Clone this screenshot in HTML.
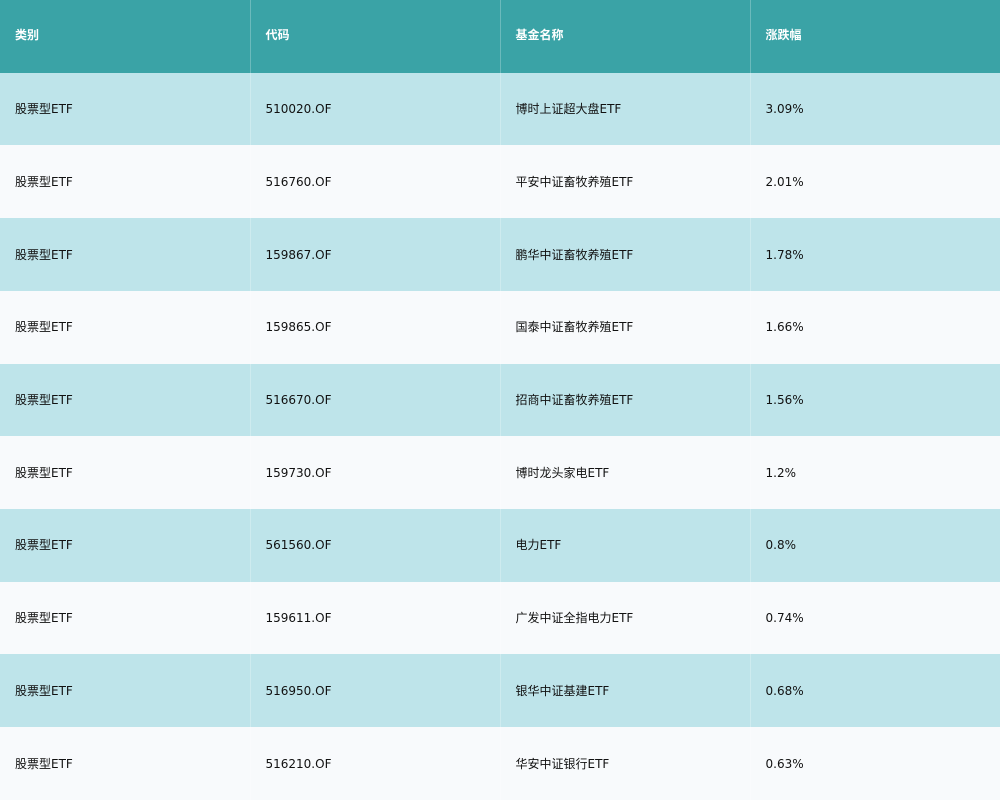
<!DOCTYPE html><html><head><meta charset="utf-8"><style>
body{margin:0;width:1000px;height:800px;overflow:hidden;font-family:"DejaVu Sans","Noto Sans CJK SC",sans-serif;font-size:12px;}
table{border-collapse:collapse;width:1000px;table-layout:fixed}
td,th{height:72.73px;padding:0 0 0 15px;text-align:left;border-left:1px solid rgba(255,255,255,0.25);box-sizing:border-box;color:#111;vertical-align:middle}
td span,th span{display:block;height:14px;line-height:14px;white-space:nowrap}
td:first-child,th:first-child{border-left:none}
th{background:#3aa3a6;color:#fff;font-weight:bold}
th span{margin-top:-3px}
tr:nth-child(even) td{background:#bee4ea}
tr:nth-child(odd) td{background:#f8fafc}
</style></head><body><table>
<tr><th><span>类别</span></th><th><span>代码</span></th><th><span>基金名称</span></th><th><span>涨跌幅</span></th></tr>
<tr><td><span>股票型ETF</span></td><td><span>510020.OF</span></td><td><span>博时上证超大盘ETF</span></td><td><span>3.09%</span></td></tr>
<tr><td><span>股票型ETF</span></td><td><span>516760.OF</span></td><td><span>平安中证畜牧养殖ETF</span></td><td><span>2.01%</span></td></tr>
<tr><td><span>股票型ETF</span></td><td><span>159867.OF</span></td><td><span>鹏华中证畜牧养殖ETF</span></td><td><span>1.78%</span></td></tr>
<tr><td><span>股票型ETF</span></td><td><span>159865.OF</span></td><td><span>国泰中证畜牧养殖ETF</span></td><td><span>1.66%</span></td></tr>
<tr><td><span>股票型ETF</span></td><td><span>516670.OF</span></td><td><span>招商中证畜牧养殖ETF</span></td><td><span>1.56%</span></td></tr>
<tr><td><span>股票型ETF</span></td><td><span>159730.OF</span></td><td><span>博时龙头家电ETF</span></td><td><span>1.2%</span></td></tr>
<tr><td><span>股票型ETF</span></td><td><span>561560.OF</span></td><td><span>电力ETF</span></td><td><span>0.8%</span></td></tr>
<tr><td><span>股票型ETF</span></td><td><span>159611.OF</span></td><td><span>广发中证全指电力ETF</span></td><td><span>0.74%</span></td></tr>
<tr><td><span>股票型ETF</span></td><td><span>516950.OF</span></td><td><span>银华中证基建ETF</span></td><td><span>0.68%</span></td></tr>
<tr><td><span>股票型ETF</span></td><td><span>516210.OF</span></td><td><span>华安中证银行ETF</span></td><td><span>0.63%</span></td></tr>
</table></body></html>
